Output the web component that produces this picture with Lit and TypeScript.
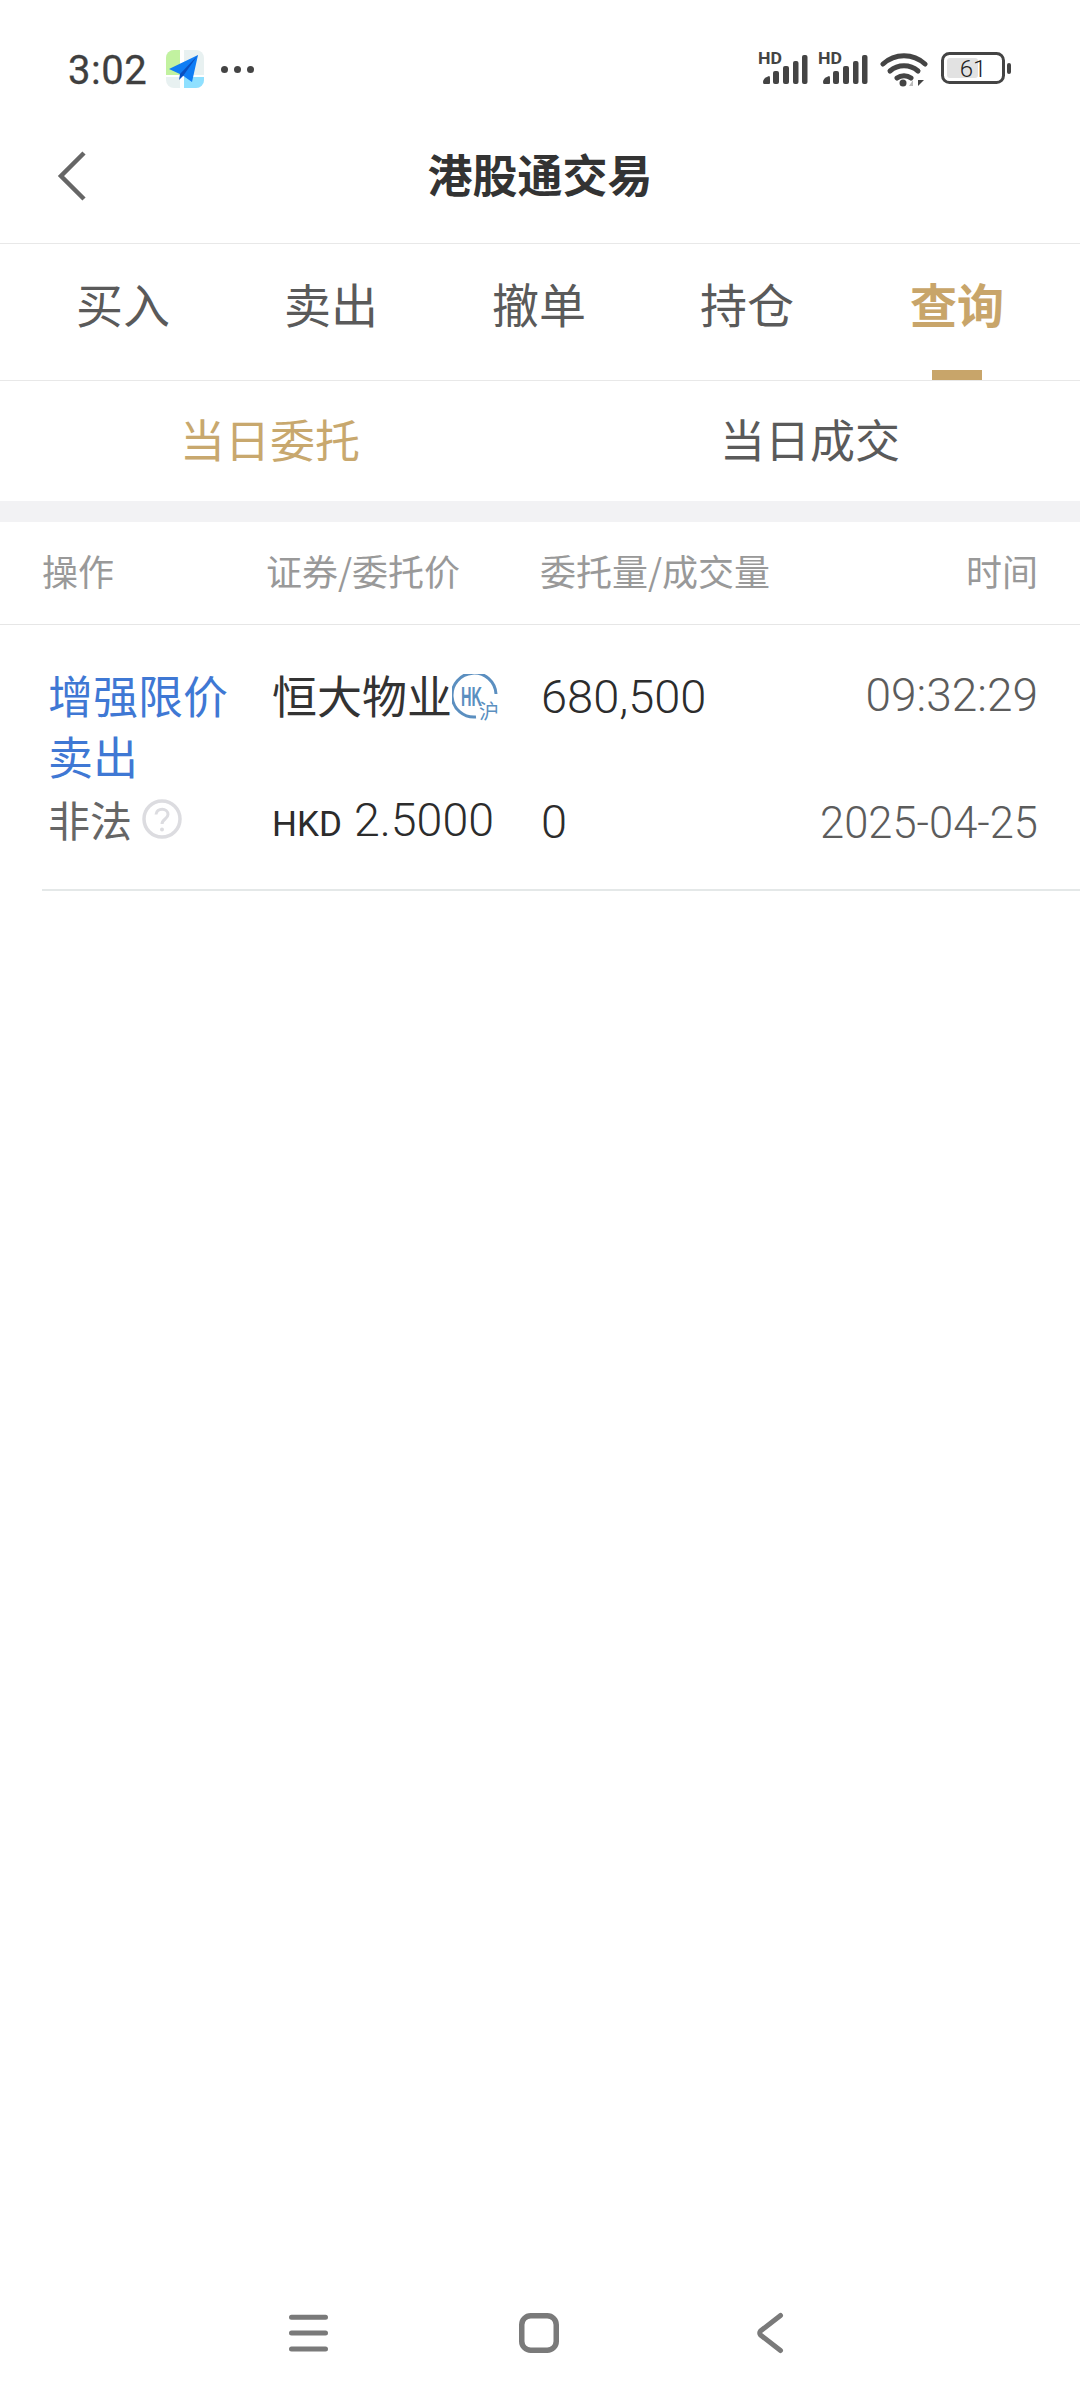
import { LitElement, html, css, svg } from "lit";
import { customElement } from "lit/decorators.js";

const signal = () => svg`<svg class="sig" width="50" height="38" viewBox="0 -4 50 38">
  <text x="0" y="12" font-family="Roboto, sans-serif" font-weight="700" font-size="16.500" fill="#444" textLength="24" lengthAdjust="spacingAndGlyphs">HD</text>
  <g fill="#444">
    <path d="M5 30 Q5 26 11 24 Q12 24 12 26 V31 Q12 32 11 32 H6 Q5 32 5 30Z"/>
    <rect x="15" y="19" width="6" height="13" rx="2"/>
    <rect x="25" y="14" width="6" height="18" rx="2"/>
    <rect x="35" y="9" width="5.500" height="23" rx="2"/>
    <rect x="44" y="3" width="5.500" height="29" rx="2"/>
  </g></svg>`;

@customElement("app-root")
export class AppRoot extends LitElement {
  static styles = css`
    :host { display: block; width: 1080px; height: 2400px; background: #fff; position: relative; overflow: hidden;
      font-family: "Noto Sans CJK SC", "Noto Sans", sans-serif; }
    .page { display: flex; flex-direction: column; height: 2400px; }
    .status { height: 110px; flex: none; display: flex; align-items: center; padding: 28px 67px 0 68px; box-sizing: border-box; }
    .clock { font: 400 40px/1 Roboto, sans-serif; color: #3f3f3f; letter-spacing: .5px; width: 98px; padding-top: 3px; -webkit-text-stroke: .3px #3f3f3f; }
    .dots { display: flex; gap: 6px; margin-left: 17px; }
    .dots i { width: 7px; height: 7px; border-radius: 50%; background: #444; display: block; }
    .right { margin-left: auto; display: flex; align-items: center; gap: 10px; }
    .sig { margin-top: -4px; }
    .wifi { margin-left: 2px; }
    .batt { margin-left: 3px; }
    .header { height: 133px; flex: none; position: relative; display: flex; align-items: center; justify-content: center;
      border-bottom: 1px solid #e8e8e8; box-sizing: content-box; }
    .header h1 { margin: 0; font-size: 45px; font-weight: 700; color: #333; line-height: 1; position: relative; top: -3px; }
    .back { position: absolute; left: 57px; top: 41px; }
    .tabs { height: 136px; flex: none; display: flex; padding: 0 20px; border-bottom: 1px solid #e8e8e8; }
    .tab { flex: 1; text-align: center; font-size: 47px; line-height: 1; padding-top: 35px; color: #5a5a5a; position: relative; left: -1px; }
    .tab.on { color: #c8a56a; font-weight: 700; left: 1px; }
    .tab.on::after { content: ""; position: absolute; left: 50%; margin-left: -25px; bottom: 0; width: 50px; height: 10px; background: #c8a56a; }
    .sub { height: 120px; flex: none; display: flex; }
    .sub div { flex: 1; text-align: center; font-size: 45px; line-height: 1; padding-top: 35px; color: #5a5a5a; }
    .sub div.on { color: #c8a86e; }
    .band { height: 21px; flex: none; background: #f2f2f4; }
    .cols { display: grid; grid-template-columns: 224px 269px 1fr auto; }
    .thead { height: 102px; flex: none; align-items: center; padding: 0 42px; border-bottom: 1px solid #e6e6e6;
      font-size: 36px; color: #999; grid-template-columns: 224px 274px 1fr auto; }
    .thead span { line-height: 1; position: relative; top: -3px; }
    .row { margin-left: 42px; padding: 39px 42px 39px 6px; border-bottom: 2px solid #e4e8e8; height: 266px; box-sizing: border-box; }
    .cell { display: flex; flex-direction: column; justify-content: space-between; font-size: 45px; line-height: 62px; color: #333; }
    .op { color: #3f78d4; width: 182px; line-height: 61px; }
    .gray { color: #666; display: flex; align-items: center; gap: 10px; font-size: 42px; }
    .name { display: flex; align-items: center; }
    .hk { margin-top: 8px; }
    .nums { font-family: Roboto, sans-serif; font-size: 47px; font-weight: 300; padding-top: 2px; margin-bottom: -3px; color: #2c2c2c; }
    .price { font-family: Roboto, sans-serif; font-size: 46.500px; font-weight: 300; color: #2c2c2c; margin-bottom: -6px; }
    .hkd { font-size: 35px; font-weight: 400; margin-right: 12px; }
    .time { text-align: right; color: #5c5c5c; font-family: Roboto, sans-serif; font-size: 46px; font-weight: 300; margin-bottom: -5px; }
    .date { font-size: 43.500px; }
    .spacer { flex: 1; }
    .nav { height: 150px; flex: none; display: flex; align-items: flex-start; padding: 58px 0 0 288px; box-sizing: border-box; }
    .nav svg { display: block; }
    .m1 { margin-left: 188px; }
    .m2 { margin-left: 194px; }
  `;

  render() {
    return html`<div class="page">
      <div class="status">
        <span class="clock">3:02</span>
        <svg width="38" height="38" viewBox="0 0 38 38">
          <defs><clipPath id="cp"><rect width="38" height="38" rx="8"/></clipPath></defs>
          <g clip-path="url(#cp)">
            <rect width="38" height="38" fill="#e8f1f1"/>
            <rect width="14" height="25" fill="#c2f2a0"/>
            <rect x="18" y="26" width="20" height="12" fill="#8fe0ff"/>
            <rect x="14" width="4" height="38" fill="#fff"/>
            <rect y="25" width="38" height="2" fill="#fff"/>
          </g>
          <path d="M3 19 32 5 26 32 16 25Z" fill="#0f7df5"/>
          <path d="M32 5 14 24 13 30 17 26Z" fill="#0a4fc0"/>
        </svg>
        <span class="dots"><i></i><i></i><i></i></span>
        <div class="right">
          ${signal()}${signal()}
          <svg class="wifi" width="48" height="36" viewBox="0 0 48 36" fill="none" stroke="#444" stroke-linecap="round">
            <path d="M3 13C15 2 33 2 45 13" stroke-width="5"/>
            <path d="M10 20C18 13 30 13 38 20" stroke-width="5"/>
            <path d="M17 27C21 24 27 24 31 27" stroke-width="5"/>
            <circle cx="23" cy="32" r="3.500" fill="#444" stroke="none"/>
            <path d="M33 35V29L29 35Z" fill="#bbb" stroke="none"/>
            <path d="M38 29V35L44 29Z" fill="#444" stroke="none"/>
          </svg>
          <svg class="batt" width="72" height="34" viewBox="0 0 72 34">
            <rect x="1.500" y="1.500" width="61" height="29" rx="7" fill="#fff" stroke="#444" stroke-width="3"/>
            <rect x="6" y="6" width="31" height="20" rx="3" fill="#e2e2e2"/>
            <rect x="66" y="11" width="4" height="11" rx="2" fill="#444"/>
            <text x="32" y="25" text-anchor="middle" font-family="Roboto, sans-serif" font-size="24" font-weight="300" fill="#222">61</text>
          </svg>
        </div>
      </div>
      <div class="header">
        <svg class="back" width="30" height="50" viewBox="0 0 30 50" fill="none" stroke="#666" stroke-width="4.500">
          <path d="M27 2 4 25 27 48"/>
        </svg>
        <h1>港股通交易</h1>
      </div>
      <div class="tabs">
        <div class="tab">买入</div><div class="tab">卖出</div><div class="tab">撤单</div><div class="tab">持仓</div><div class="tab on">查询</div>
      </div>
      <div class="sub"><div class="on">当日委托</div><div>当日成交</div></div>
      <div class="band"></div>
      <div class="cols thead"><span>操作</span><span>证券/委托价</span><span>委托量/成交量</span><span>时间</span></div>
      <div class="cols row">
        <div class="cell">
          <div class="op">增强限价卖出</div>
          <div class="gray">非法
            <svg width="40" height="40" viewBox="0 0 40 40">
              <circle cx="20" cy="20" r="18" fill="none" stroke="#dcdce0" stroke-width="3.500"/>
              <path d="M14 15.500C14.500 8.500 26 8.500 26 15.500 26 20 20 20 20 25" fill="none" stroke="#dcdce0" stroke-width="3"/>
              <circle cx="20" cy="30.500" r="2" fill="#dcdce0"/>
            </svg>
          </div>
        </div>
        <div class="cell">
          <div class="name">恒大物业
            <svg class="hk" width="48" height="50" viewBox="0 0 48 50">
              <path d="M24 43A22 22 0 1 1 44 20" fill="none" stroke="#5b8fc0" stroke-width="3"/>
              <text fill="#5b8fc0"><tspan x="9" y="32" font-family="'Liberation Sans', sans-serif" font-weight="700" font-size="27" textLength="21" lengthAdjust="spacingAndGlyphs">HK</tspan><tspan x="27" y="45" font-size="20">沪</tspan></text>
            </svg>
          </div>
          <div class="price"><span class="hkd">HKD</span>2.5000</div>
        </div>
        <div class="cell nums"><div>680,500</div><div>0</div></div>
        <div class="cell time"><div>09:32:29</div><div class="date">2025-04-25</div></div>
      </div>
      <div class="spacer"></div>
      <div class="nav">
        <svg width="42" height="48" viewBox="0 0 42 48" fill="none" stroke="#7a7a7a" stroke-width="5" stroke-linecap="round">
          <path d="M3.500 9.300H37.500M3.500 25H37.500M3.500 41H37.500"/>
        </svg>
        <svg class="m1" width="44" height="48" viewBox="0 0 44 48" fill="none" stroke="#7a7a7a" stroke-width="5.500">
          <rect x="3.750" y="7.750" width="34.500" height="34.500" rx="9"/>
        </svg>
        <svg class="m2" width="30" height="50" viewBox="0 0 30 50" fill="none" stroke="#7a7a7a" stroke-width="5" stroke-linecap="round" stroke-linejoin="round">
          <path d="M24.500 7.500 4.500 23Q3 25 4.500 27L24.500 42.500"/>
        </svg>
      </div>
    </div>`;
  }
}
